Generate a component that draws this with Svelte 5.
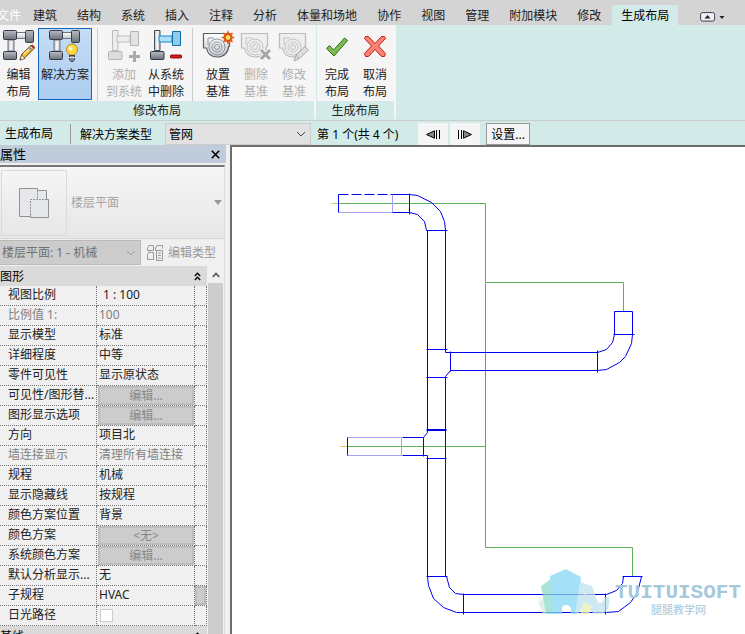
<script>
  const tabs = ['文件', '建筑', '结构', '系统', '插入', '注释', '分析', '体量和场地', '协作', '视图', '管理', '附加模块', '修改', '生成布局'];
  const panels = [
    {
      title: '修改布局',
      groups: [
        [
          { icon: 'edit', lines: ['编辑', '布局'], size: 'w37' },
          { icon: 'solution', lines: ['解决方案'], size: 'w54', selected: true }
        ],
        [
          { icon: 'add', lines: ['添加', '到系统'], size: 'w42', disabled: true },
          { icon: 'remove', lines: ['从系统', '中删除'], size: 'w42' }
        ],
        [
          { icon: 'place', lines: ['放置', '基准'] },
          { icon: 'delete', lines: ['删除', '基准'], disabled: true },
          { icon: 'modify', lines: ['修改', '基准'], disabled: true }
        ]
      ]
    },
    {
      title: '生成布局',
      groups: [[{ icon: 'finish', lines: ['完成', '布局'] }, { icon: 'cancel', lines: ['取消', '布局'] }]]
    }
  ];
  const rows = [
    { name: '视图比例', value: '1 : 100', indent: true },
    { name: '比例值 1:', value: '100', dim: true },
    { name: '显示模型', value: '标准' },
    { name: '详细程度', value: '中等' },
    { name: '零件可见性', value: '显示原状态' },
    { name: '可见性/图形替...', button: '编辑...' },
    { name: '图形显示选项', button: '编辑...' },
    { name: '方向', value: '项目北' },
    { name: '墙连接显示', value: '清理所有墙连接', dim: true },
    { name: '规程', value: '机械' },
    { name: '显示隐藏线', value: '按规程' },
    { name: '颜色方案位置', value: '背景' },
    { name: '颜色方案', button: '<无>' },
    { name: '系统颜色方案', button: '编辑...' },
    { name: '默认分析显示...', value: '无' },
    { name: '子规程', value: 'HVAC', more: true },
    { name: '日光路径', check: true }
  ];
</script>

{#snippet chevrons()}
  <svg width="7" height="9" viewBox="0 0 7 9" fill="none" stroke="#000" stroke-width="1.3"><path d="M.8 4 3.5 1.2 6.2 4M.8 8 3.5 5.2 6.2 8" /></svg>
{/snippet}

{#snippet icon(kind)}
  <svg class="icon" width="32" height="34" viewBox="0 0 32 34" aria-hidden="true">
    <defs>
      <linearGradient id="steel" x2="0" y2="1"><stop stop-color="#b9bdc6" /><stop offset="1" stop-color="#6c7078" /></linearGradient>
      <linearGradient id="pipe" x2="1" y2="0"><stop stop-color="#b5b9c0" /><stop offset=".5" stop-color="#fff" /><stop offset="1" stop-color="#b5b9c0" /></linearGradient>
      <linearGradient id="duct" x2="0" y2="1"><stop stop-color="#fff" /><stop offset="1" stop-color="#c5c9cf" /></linearGradient>
    </defs>
    {#if kind === 'edit' || kind === 'solution'}
      <path d="M5 11h6v11H5z" fill="url(#pipe)" stroke="#70747c" />
      <path d="M13 3.5h10v6H13z" fill="url(#duct)" stroke="#70747c" />
      <g fill="url(#steel)" stroke="#363b47"><rect x=".5" y="1.5" width="13" height="9" rx="1" /><rect x="22.500" y="1.500" width="8" height="12" rx="1" /><rect x=".5" y="22.500" width="13" height="8" rx="1" /></g>
      {#if kind === 'edit'}
        <path d="m17 31 2-6 9-8.500 3 3-9 9z" fill="#f8bd35" stroke="#4d3412" />
        <path d="m20.500 25 8-7" stroke="#ffeb9b" stroke-width="1.500" />
        <path d="m17 31 1.500-5 3.500 3.500z" fill="#fff" stroke="#4d3412" stroke-width=".7" />
        <path d="m26 18.500 3 3" stroke="#8b949e" stroke-width="2" /><path d="m28.500 16 3 3" stroke="#a03c28" stroke-width="2" />
      {:else}
        <path d="M20.500 26c-1-2-3-3-3-5.500a5.500 5.500 0 0 1 11 0c0 2.500-2 3.500-3 5.500z" fill="#ffd844" stroke="#bf8417" />
        <circle cx="21.500" cy="19.500" r="2" fill="#fffbd0" />
        <path d="M20.500 26.500h5v4l-1.500 2h-2l-1.500-2z" fill="#858990" stroke="#3b3f48" /><path d="M20 28.500h6" stroke="#dfe1e5" />
      {/if}
    {:else if kind === 'add' || kind === 'remove'}
      {@const dim = kind === 'add'}
      <path d="M4.500 1.500h5.500v20H4.500z" fill={dim ? '#eee' : 'url(#pipe)'} stroke={dim ? '#bbb' : '#484d59'} />
      <path d="M9 7h13v6H9z" fill={dim ? '#eee' : '#aee0fa'} stroke={dim ? '#bbb' : '#1688ce'} />
      <path d="M22.500 2.500h8v14h-8z" fill={dim ? '#e2e2e2' : '#91cbed'} stroke={dim ? '#b4b4b4' : '#0b6da9'} />
      <rect x=".5" y="22.500" width="13.500" height="8" rx="1" fill={dim ? '#ddd' : 'url(#steel)'} stroke={dim ? '#b4b4b4' : '#303642'} />
      {#if dim}<path d="M26.500 22v11M21 27.500h11" stroke="#aaa" stroke-width="3" />{:else}<rect x="20.500" y="26" width="11" height="3" rx="1" fill="#d71920" stroke="#8d0a10" />{/if}
    {:else if kind === 'place' || kind === 'delete' || kind === 'modify'}
      {@const dim = kind !== 'place'}
      <path d="M1.500 4.500h26v13h-1c0 6-5 10.500-11 10.500S5.500 25 4.500 19h-3z" fill={dim ? '#eee' : 'url(#duct)'} stroke={dim ? '#bbb' : '#5b6068'} stroke-width="1.200" />
      <g fill="none" stroke={dim ? '#c3c3c3' : '#92969d'}><path d="M6 16V9h6" /><circle cx="15" cy="18" r="8" /><circle cx="15" cy="18" r="5" /><circle cx="15" cy="18" r="2.500" /></g>
      {#if kind === 'place'}
        <path d="m26 1 1.500 3.500L31 3.500 29.800 7 33 8.500 29.800 10l1.200 3.500-3.500-1L26 16l-1.500-3.500-3.500 1L22.200 10 19 8.500 22.200 7 21 3.500l3.500 1z" fill="#e8601c" />
        <circle cx="26" cy="8.500" r="3" fill="#ffe451" stroke="#bb3918" />
      {:else if kind === 'delete'}
        <path d="m21 21 9 9m0-9-9 9" stroke="#f5f5f5" stroke-width="5" /><path d="m21 21 9 9m0-9-9 9" stroke="#a5a5a5" stroke-width="3" />
      {:else}
        <path d="m16 32 2-6 9-8.500 3.500 3.500-9 8.500z" fill="#ddd" stroke="#aaa" /><path d="m18 26 3.500 3.500" stroke="#aaa" />
      {/if}
    {:else if kind === 'finish'}
      <path d="m5.500 19.500 3-3 4 4.500L23.500 9l3 2.500L13 27z" fill="#7cbd53" stroke="#2c6c1a" stroke-linejoin="round" />
    {:else}
      <path d="M6.500 7.500h3l6.500 7 6.500-7h3l1 2-7 7.500 7 7.500-1 3h-3l-6.500-7-6.500 7h-3l-1-3 7-7.500-7-7.500z" fill="#fb8273" stroke="#bc2319" stroke-linejoin="round" />
    {/if}
  </svg>
{/snippet}

<div class="app">
  <nav class="tabs">
    {#each tabs as tab}
      <button class="tab" class:file={tab === '文件'} class:active={tab === '生成布局'}>{tab}</button>
    {/each}
    <button class="collapse" aria-label="最小化功能区">
      <svg width="25" height="11" viewBox="0 0 25 11"><rect x=".6" y=".6" width="14" height="8.500" rx="2" fill="#eef0f6" stroke="#3c4150" /><path d="m7.500 3 3 3.500h-6zM19.500 4h5l-2.500 3z" fill="#222" /></svg>
    </button>
  </nav>

  <div class="ribbon">
    {#each panels as panel}
      <section class="panel">
        <div class="tools">
          {#each panel.groups as group}
            <div class="group">
              {#each group as tool}
                <button class="tool {tool.size ?? 'w38'}" class:selected={tool.selected} disabled={tool.disabled}>
                  {@render icon(tool.icon)}
                  {#each tool.lines as line}<span>{line}</span>{/each}
                </button>
              {/each}
            </div>
          {/each}
        </div>
        <footer>{panel.title}</footer>
      </section>
    {/each}
  </div>

  <div class="options">
    <span class="mode">生成布局</span>
    <label for="solution-type">解决方案类型</label>
    <div class="choice">
      <select id="solution-type"><option>管网</option></select>
      <svg width="10" height="6" viewBox="0 0 10 6" fill="none" stroke="#444"><path d="m1 1 4 4 4-4" /></svg>
    </div>
    <span class="count">第 1 个(共 4 个)</span>
    <button class="step" aria-label="上一个"><svg width="16" height="9" viewBox="0 0 16 9"><path d="M9.500 .8v7.400L1.500 4.500z" fill="#888" stroke="#000" /><path d="M11.500 0v9M14.500 0v9" stroke="#000" /></svg></button>
    <button class="step" aria-label="下一个"><svg width="16" height="9" viewBox="0 0 16 9"><path d="M6.500 .8v7.400l8-3.700z" fill="#888" stroke="#000" /><path d="M1.500 0v9M4.500 0v9" stroke="#000" /></svg></button>
    <button class="settings">设置...</button>
  </div>

  <main>
    <aside>
      <header class="title">
        <span>属性</span>
        <button aria-label="关闭"><svg width="9" height="9" viewBox="0 0 9 9" stroke="#000" stroke-width="1.600"><path d="m.8.8 7.400 7.400m0-7.400L.8 8.200" /></svg></button>
      </header>
      <div class="props">
        <button class="type" disabled>
          <span class="thumb">
            <svg width="32" height="32" viewBox="0 0 32 32" fill="#e5e7eb" stroke="#8f9299"><path d="M1.500 1.500h18v2h9v24h-27z" stroke="none" /><path d="M12 29.500H1.500v-28h18v2h9v9" fill="none" /><path d="M19.500 3.500v9" stroke-dasharray="2 1" /><path d="M12.500 12.500h18v18h-18z" stroke="none" /><path d="M12.500 28v2.500h18v-18h-2" fill="none" /><path d="M12.500 28v-15.500h18" fill="none" stroke-dasharray="2 1" /></svg>
          </span>
          <span class="type-name">楼层平面</span>
          <svg width="8" height="5" viewBox="0 0 8 5"><path d="M0 0h8L4 5z" fill="#999" /></svg>
        </button>
        <div class="instance">
          <div class="choice dim">
            <select aria-label="实例" disabled><option>楼层平面: 1 - 机械</option></select>
            <svg width="10" height="6" viewBox="0 0 10 6" fill="none" stroke="#999"><path d="m1 1 4 4 4-4" /></svg>
          </div>
          <button class="edit-type" disabled>
            <svg width="16" height="16" viewBox="0 0 16 16" fill="none" stroke="#999"><path d="M.5 3 2 .5h4.500v5h-6zM8.500 3 10 .5h5.500v3M8.500 3v3M.5 9.500 2 7.500h4.500v7h-6zM2 7.500v-2M9.500 5.500h6v10h-6z" /><path d="M11 8h3M11 10.500h3M11 13h3" /></svg>
            编辑类型
          </button>
        </div>
        <div class="grid">
          <div class="list">
            <h2>图形 {@render chevrons()}</h2>
            <table>
              <tbody>
                {#each rows as row, i}
                  <tr class:faded={row.dim}>
                    <th scope="row">{#if row.check}<label for="prop-{i}">{row.name}</label>{:else}{row.name}{/if}</th>
                    <td class:filled={row.button} class:indent={row.indent}>
                      {#if row.button}<button disabled>{row.button}</button>
                      {:else if row.check}<input id="prop-{i}" type="checkbox" />
                      {:else}{row.value}{/if}
                    </td>
                    <td class="more">{#if row.more}<button aria-label="更多"></button>{/if}</td>
                  </tr>
                {/each}
              </tbody>
            </table>
            <h2>基线 {@render chevrons()}</h2>
          </div>
          <div class="scroll">
            <button aria-label="向上滚动"><svg width="8" height="6" viewBox="0 0 8 6" fill="none" stroke="#555" stroke-width="1.600"><path d="m.8 5 3.200-3.500L7.200 5" /></svg></button>
            <i></i>
          </div>
        </div>
      </div>
    </aside>

    <div class="canvas">
      <svg width="513" height="487" viewBox="232 147 513 487" fill="none" stroke-width="1">
        <g transform="translate(.5 .5)" stroke="#5cb05c">
          <path d="M331 203h7M340 446h7" stroke="#d9c94f" />
          <path d="M338 203h147v79h138v29M347 446h138v101h147v29" />
          <path d="M485 283v163" stroke="#7474f5" />
        </g>
        <g transform="translate(.5 .5)" stroke="#0000f0">
          <path d="M338 212h54v-18M347 455h54v-18h-54" stroke="#a3a3f5" />
          <path d="M338 194h54" stroke-dasharray="10 3" />
          <path d="M338 194v18M392 194h17M392 212h17M409 193v21" />
          <path d="M409 194l8 1 14 7 9 9 4 10 1 9M409 212l8 2 7 7 2 9M426 230h21" />
          <path d="M427 230v202M445 230v122M426 349h21M426 377h21M445 352h152M450 351v20M450 370h147M450 370l-5 6v200M597 350v22" />
          <path d="M597 352l9-3 6-7 2-8M597 370l9-1 13-7 6-6 6-13 1-9M613 334h21M614 334v-23h18v23" />
          <path d="M426 429h20M426 430h20M427 432l-4 5v19M402 437h21M402 455h25v121M426 458h20M347 437v18" />
          <path d="M426 576h21M427 576l1 9 5 13 10 9 13 5h7M446 576l3 11 6 6 8 1M463 593v21M463 594h143M463 612h143M605 593v21" />
          <path d="M606 594l10-4 6-7 1-7M606 612l12-1 12-9 7-10 4-16M622 576h20" />
        </g>
        <g opacity=".75" stroke="none">
          <path d="M538 602l9-6 3 18h-7z" fill="#d8eadf" />
          <path d="M541 586l10-7 8 2v33h-13z" fill="#8ddccb" />
          <path d="M550 576l16-7 15 8-4 37h-6v-5q-1-4-5-4t-4 4v5h-10z" fill="#87d8f3" />
          <path d="M580 582l12 4 5 14c2 5 8 3 7-3h5c2 12-4 18-12 17-8-1-8-8-13-10l-6 10h-3z" fill="#bfe2ef" />
          <path d="M584 602l8 5-3 7h-9z" fill="#e9efae" /><circle cx="585" cy="594" r="1" fill="#fff" />
        </g>
        <text class="brand" x="615" y="598">TUITUISOFT</text>
        <text class="sub" x="651" y="614">腿腿教学网</text>
      </svg>
    </div>
  </main>
</div>

<style>
  :global(body) { margin: 0; overflow: hidden; }
  .app { height: 100vh; display: flex; flex-direction: column; overflow: hidden; background: #f0f0f0; color: #222; font: 12px/17px "Noto Sans", "Noto Sans CJK SC", sans-serif; }
  .app * { box-sizing: border-box; }
  button { border: 0; margin: 0; padding: 0; background: none; font: inherit; color: inherit; white-space: nowrap; }
  svg { display: block; flex: none; }
  .tabs { display: flex; align-items: flex-end; height: 25px; flex: none; background: #d4d4d4; }
  .tab { height: 20px; padding: 0 10px; flex: none; }
  .file { margin-left: -13px; padding-right: 2px; color: #fff; }
  .active { margin: 0 1px; padding: 0 9px; background: #d3ebe8; color: #000; }
  .collapse { margin-left: 21px; height: 15px; }
  .ribbon { display: flex; height: 96px; flex: none; background: #d3ebe8; border-bottom: 1px solid #cacdcd; }
  .panel { height: 94px; border-right: 2px solid #f5f5f5; margin-right: 1px; }
  .tools { display: flex; height: 76px; padding: 3px 1px 0 0; background: #f5f5f5; }
  .panel + .panel .tools { padding: 3px 0 0 1px; }
  .group { display: flex; }
  .group:first-child { gap: 1px; }
  .panel + .panel .group { gap: 0; }
  .group + .group { margin-left: 5px; padding-left: 5px; border-left: 1px solid #ccc; }
  .group + .group + .group { padding-left: 6px; }
  .tool { height: 72px; display: flex; flex-direction: column; align-items: center; border: 1px solid transparent; }
  .tool .icon { margin-bottom: 3px; overflow: visible; }
  .tool:disabled { color: #b0b0b0; }
  .selected { background: linear-gradient(#c5dcf5, #abcdf0); border-color: #1565c0; }
  .w37 { width: 37px; } .w38 { width: 38px; } .w42 { width: 42px; } .w54 { width: 54px; }
  footer { height: 18px; line-height: 19px; text-align: center; }
  .options { height: 24px; flex: none; display: flex; align-items: center; padding: 2px 0 0 5px; background: #d3ebe8; color: #000; }
  .mode { padding-right: 17px; border-right: 1px solid #999; height: 20px; line-height: 20px; }
  .options label { margin: 0 13px 0 9px; }
  .choice { display: flex; align-items: center; height: 22px; width: 146px; background: #e1e1e1; border: 1px solid #ccc; padding-right: 4px; }
  .choice select { flex: 1; min-width: 0; height: 100%; appearance: none; border: 0; padding: 0 0 0 3px; background: none; font: inherit; color: #000; opacity: 1; }
  .count { width: 101px; margin-left: 6px; white-space: nowrap; }
  .step { display: flex; align-items: center; justify-content: center; width: 30px; height: 22px; margin-right: 2px; background: #f5f5f5; }
  .settings { width: 44px; height: 22px; margin-left: 4px; background: #f5f5f5; border: 1px solid #999; }
  main { flex: 1; min-height: 0; display: flex; }
  aside { width: 230px; flex: none; display: flex; flex-direction: column; }
  .title { display: flex; align-items: center; justify-content: space-between; width: 226px; height: 18px; padding-right: 5px; background: #c0ccda; color: #000; font-size: 13px; }
  .title button { padding: 1px; }
  .props { width: 225px; margin-top: 2px; border-top: 2px solid #777; border-right: 1px solid #ddd; flex: 1; min-height: 0; overflow: hidden; }
  .type { display: flex; align-items: center; width: 224px; height: 72px; padding: 0 2px 0 1px; background: linear-gradient(#f6f6f6, #e6e6e6); border-bottom: 1px solid #d8d8d8; color: #a5a5a5; }
  .thumb { width: 66px; height: 66px; display: grid; place-items: center; border: 1px solid #dadada; }
  .type-name { flex: 1; padding-left: 4px; text-align: left; }
  .instance { display: flex; align-items: center; height: 27px; }
  .choice.dim { width: 141px; height: 25px; background: #ccc; border-color: #bbb; border-left: 0; }
  .choice.dim select { padding-left: 2px; color: #707070; }
  .edit-type { display: flex; align-items: center; gap: 5px; margin-left: 6px; color: #999; }
  .grid { display: flex; }
  .list { width: 207px; }
  h2 { display: flex; align-items: center; justify-content: space-between; height: 20px; margin: 0; padding-right: 6px; background: #dadada; color: #000; font-size: 12px; line-height: 17px; font-weight: 400; }
  table { width: 207px; table-layout: fixed; border-collapse: separate; border-spacing: 0; }
  tr { height: 20px; }
  th, td { height: 20px; padding: 0 0 2px 2px; border-bottom: 1px dotted #777; border-right: 1px dotted #777; text-align: left; font-weight: 400; line-height: 17px; white-space: nowrap; overflow: hidden; }
  th { width: 97px; padding-left: 8px; }
  .faded { color: #808080; }
  .indent { padding-left: 6px; }
  .filled { padding: 0 0 0 1px; }
  .more { width: 12px; padding: 0; }
  td button { display: block; width: 100%; height: 19px; line-height: 15px; background: #ccc; border: 2px solid #bdbdbd; color: #888; }
  input { appearance: none; display: block; width: 13px; height: 13px; margin: 2px 1px 0; border: 1px solid #ccc; background: #fff; }
  .scroll { display: flex; flex-direction: column; width: 17px; padding-left: 1px; }
  .scroll button { height: 17px; display: grid; place-items: center; flex: none; }
  .scroll i { flex: 1; margin-right: 1px; background: #cdcdcd; }
  .canvas { flex: 1; min-width: 0; overflow: hidden; background: #fff; border: solid #6d6d6d; border-width: 2px 0 0 2px; }
  .brand { font: bold 21px "Liberation Mono", monospace; fill: #a5c8da; }
  .sub { font: 11px "Noto Sans CJK SC", sans-serif; fill: #a5c8da; }
</style>
